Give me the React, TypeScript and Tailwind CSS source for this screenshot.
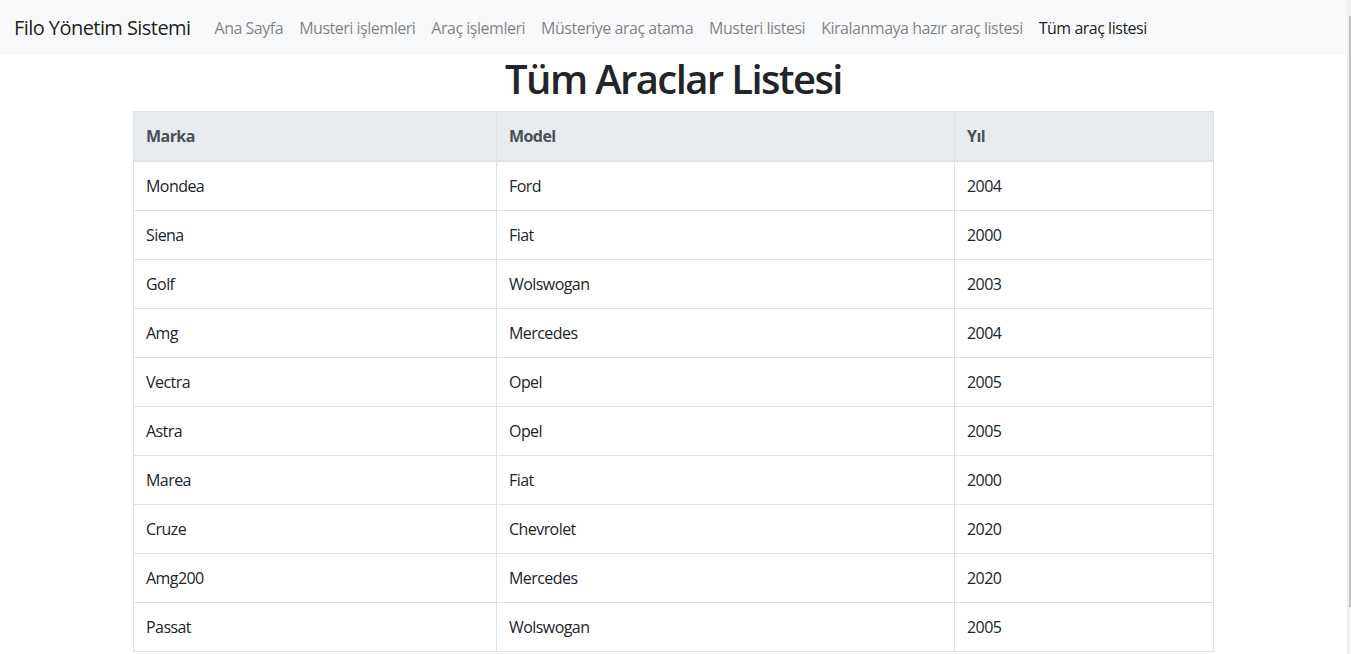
const navLinks = [
  "Ana Sayfa",
  "Musteri işlemleri",
  "Araç işlemleri",
  "Müsteriye araç atama",
  "Musteri listesi",
  "Kiralanmaya hazır araç listesi",
];

const cars = [
  { marka: "Mondea", model: "Ford", yil: "2004" },
  { marka: "Siena", model: "Fiat", yil: "2000" },
  { marka: "Golf", model: "Wolswogan", yil: "2003" },
  { marka: "Amg", model: "Mercedes", yil: "2004" },
  { marka: "Vectra", model: "Opel", yil: "2005" },
  { marka: "Astra", model: "Opel", yil: "2005" },
  { marka: "Marea", model: "Fiat", yil: "2000" },
  { marka: "Cruze", model: "Chevrolet", yil: "2020" },
  { marka: "Amg200", model: "Mercedes", yil: "2020" },
  { marka: "Passat", model: "Wolswogan", yil: "2005" },
];

const Navbar = () => {
  return (
    <nav className="flex items-center h-[55px] pl-[14px] pr-4 bg-[#f8f9fa]">
      <span className="mr-4 text-[20px] leading-[30px] text-[rgba(0,0,0,0.9)]">
        Filo Yönetim Sistemi
      </span>
      <ul className="flex items-center tracking-[-0.03em]">
        {navLinks.map((link) => (
          <li key={link} className="px-2 leading-6 text-[rgba(0,0,0,0.5)]">
            {link}
          </li>
        ))}
        <li className="px-2 leading-6 text-[rgba(0,0,0,0.9)]">
          Tüm araç listesi
        </li>
      </ul>
    </nav>
  );
};

const CarTable = () => {
  return (
    <table className="w-[1080px] mx-auto table-fixed border-collapse border border-[#dee2e6] text-left">
      <colgroup>
        <col className="w-[363px]" />
        <col className="w-[458px]" />
        <col className="w-[259px]" />
      </colgroup>
      <thead>
        <tr className="bg-[#e9ecef] text-[#495057]">
          {["Marka", "Model", "Yıl"].map((h) => (
            <th
              key={h}
              className="p-3 leading-6 font-bold border border-[#dee2e6] border-b-2"
            >
              {h}
            </th>
          ))}
        </tr>
      </thead>
      <tbody>
        {cars.map((car, index) => (
          <tr key={index} className="text-[#212529]">
            <td className="p-3 leading-6 border border-[#dee2e6]">{car.marka}</td>
            <td className="p-3 leading-6 border border-[#dee2e6]">{car.model}</td>
            <td className="p-3 leading-6 border border-[#dee2e6]">{car.yil}</td>
          </tr>
        ))}
      </tbody>
    </table>
  );
};

const App = () => {
  return (
    <div
      className="flex h-[654px] overflow-hidden bg-white text-base tracking-[-0.035em]"
      style={{ fontFamily: '"Segoe UI", "Open Sans", "Noto Sans", sans-serif' }}
    >
      <div className="flex-1 min-w-0">
        <Navbar />
        <main>
          <h1 className="mb-2 text-center text-[40px] leading-[48px] font-semibold tracking-[-0.04em] text-[#212529]">
            Tüm Araclar Listesi
          </h1>
          <CarTable />
        </main>
      </div>
      {/* scrollbar */}
      <div className="flex flex-col w-[4px] pt-[16px] pb-[47px] pl-[2px] bg-[#f1f1f1]">
        <div className="flex-1 bg-[#c1c1c1]" />
      </div>
    </div>
  );
};

export default App;
